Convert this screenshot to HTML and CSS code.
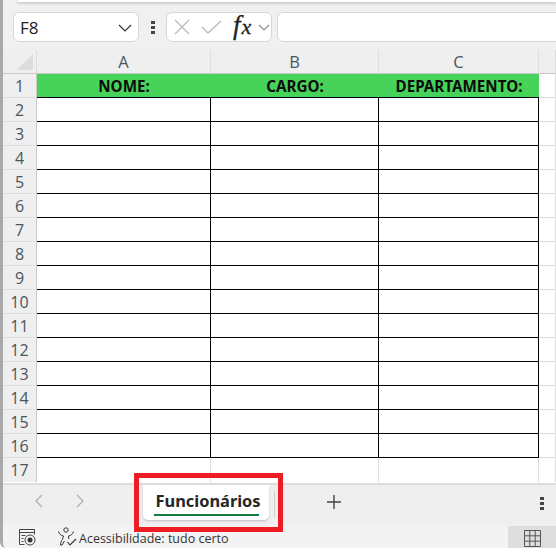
FILE: index.html
```html
<!DOCTYPE html>
<html lang="pt">
<head>
<meta charset="utf-8">
<title>Funcionários</title>
<link rel="stylesheet" href="styles.css">
</head>
<body>
<div class="window">
  <div class="top-strip"><div class="ribbon-edge"></div></div>
  <div class="formula-bar">
    <div class="name-box">
      <span class="name-text">F8</span>
      <svg class="chev" width="14" height="8" viewBox="0 0 14 8"><path d="M1 1l6 6 6-6" fill="none" stroke="#333" stroke-width="1.2"/></svg>
    </div>
    <div class="dots"><i></i><i></i><i></i></div>
    <div class="fx-box">
      <svg width="16" height="16" viewBox="0 0 16 16"><path d="M1 1l14 14M15 1L1 15" fill="none" stroke="#b9b9b9" stroke-width="1.3"/></svg>
      <svg class="check" width="22" height="14" viewBox="0 0 22 14"><path d="M1 7l6 6L20 1" fill="none" stroke="#b9b9b9" stroke-width="1.3"/></svg>
      <span class="fx"><span>f</span>x</span>
      <svg width="12" height="7" viewBox="0 0 12 7"><path d="M1 1l5 5 5-5" fill="none" stroke="#888" stroke-width="1.1"/></svg>
    </div>
    <div class="formula-input"></div>
  </div>
  <div class="sheet">
    <div class="corner"><svg width="16" height="16" viewBox="0 0 16 16"><path d="M16 0v16H0z" fill="#dcdcdc"/></svg></div>
    <div class="col-head">A</div><div class="col-head">B</div><div class="col-head">C</div><div class="col-head"></div>

    <div class="row-head">1</div><div class="title">NOME:</div><div class="title">CARGO:</div><div class="title">DEPARTAMENTO:</div><div class="cell"></div>
    <div class="row-head">2</div><div class="box"></div><div class="box"></div><div class="box"></div><div class="cell"></div>
    <div class="row-head">3</div><div class="box"></div><div class="box"></div><div class="box"></div><div class="cell"></div>
    <div class="row-head">4</div><div class="box"></div><div class="box"></div><div class="box"></div><div class="cell"></div>
    <div class="row-head">5</div><div class="box"></div><div class="box"></div><div class="box"></div><div class="cell"></div>
    <div class="row-head">6</div><div class="box"></div><div class="box"></div><div class="box"></div><div class="cell"></div>
    <div class="row-head">7</div><div class="box"></div><div class="box"></div><div class="box"></div><div class="cell"></div>
    <div class="row-head">8</div><div class="box"></div><div class="box"></div><div class="box"></div><div class="cell"></div>
    <div class="row-head">9</div><div class="box"></div><div class="box"></div><div class="box"></div><div class="cell"></div>
    <div class="row-head">10</div><div class="box"></div><div class="box"></div><div class="box"></div><div class="cell"></div>
    <div class="row-head">11</div><div class="box"></div><div class="box"></div><div class="box"></div><div class="cell"></div>
    <div class="row-head">12</div><div class="box"></div><div class="box"></div><div class="box"></div><div class="cell"></div>
    <div class="row-head">13</div><div class="box"></div><div class="box"></div><div class="box"></div><div class="cell"></div>
    <div class="row-head">14</div><div class="box"></div><div class="box"></div><div class="box"></div><div class="cell"></div>
    <div class="row-head">15</div><div class="box"></div><div class="box"></div><div class="box"></div><div class="cell"></div>
    <div class="row-head">16</div><div class="box"></div><div class="box"></div><div class="box"></div><div class="cell"></div>
    <div class="row-head last">17</div><div class="cell last"></div><div class="cell last"></div><div class="cell last"></div><div class="cell last"></div>
  </div>
  <div class="tab-bar">
    <div class="nav">
      <svg width="9" height="14" viewBox="0 0 9 14"><path d="M8 1L2 7l6 6" fill="none" stroke="#b0b0b0" stroke-width="1.3"/></svg>
      <svg width="9" height="14" viewBox="0 0 9 14"><path d="M1 1l6 6-6 6" fill="none" stroke="#b0b0b0" stroke-width="1.3"/></svg>
    </div>
    <div class="tab"><span class="tab-label">Funcionários</span></div>
    <div class="tab-sep"></div>
    <svg class="plus" width="16" height="16" viewBox="0 0 16 16"><path d="M8 1v14M1 8h14" fill="none" stroke="#444" stroke-width="1.4"/></svg>
    <div class="dots tab-dots"><i></i><i></i><i></i></div>
    <div class="callout"></div>
  </div>
  <div class="status-bar">
    <svg class="macro" width="18" height="18" viewBox="0 0 18 18"><path d="M1.500 1.500h15M1.500 4.500h15M1.500 1.500v15h5M16.500 1.500v5M3.500 7.500h4M3.500 10.500h2M3.500 13.500h2" fill="none" stroke="#444" stroke-width="1"/><circle cx="12" cy="12" r="5" fill="none" stroke="#444" stroke-width="1"/><circle cx="12" cy="12" r="2.500" fill="#333"/></svg>
    <svg class="a11y" width="21" height="20" viewBox="0 0 21 20"><circle cx="9" cy="3" r="2.200" fill="none" stroke="#333" stroke-width="1"/><path d="M1.500 4.500c.5 2.500 2.500 4 5 4.500l-1 3.500c-1 1-2 3-2 5.500h1.500l2.500-4M16.500 4.500c-.5 2.500-2.500 4-5 4.500l.3 3" fill="none" stroke="#333" stroke-width="1"/><path d="M10.500 15l2.500 3 6-6" fill="none" stroke="#333" stroke-width="1.100"/></svg>
    <span class="status-text">Acessibilidade: tudo certo</span>
    <div class="view-btn"><svg width="17" height="17" viewBox="0 0 17 17"><path d="M.5.500h16v16H.5zM.5 5.800h16M.5 11.200h16M5.800.500v16M11.200.500v16" fill="none" stroke="#555" stroke-width="1"/></svg></div>
  </div>
</div>
</body>
</html>
```
FILE: styles.css
```css
* { box-sizing: border-box; }
html, body { margin: 0; padding: 0; background: #fff; }
body { width: 556px; height: 552px; overflow: hidden; font-family: "Open Sans", "Noto Sans", sans-serif; }

.window {
  width: 556px;
  height: 548px;
  background: #f0f0f0;
  border-left: 3px solid #a9a9a9;
  border-bottom-left-radius: 6px;
  overflow: hidden;
}

.top-strip { height: 12px; padding-left: 14px; }
.ribbon-edge {
  height: 2px;
  background: #fff;
  border-bottom-left-radius: 4px;
  box-shadow: 0 1px 3px rgba(0, 0, 0, .28);
}

.formula-bar { height: 30px; display: flex; align-items: stretch; padding-left: 10px; }
.name-box, .fx-box, .formula-input {
  height: 30px;
  background: #fff;
  border: 1px solid #d6d6d6;
  border-radius: 6px;
}
.name-box { width: 126px; display: flex; align-items: center; justify-content: space-between; padding: 0 6px 0 6px; }
.name-text { font: 17px "Open Sans", sans-serif; color: #222; }
.chev { margin-top: 2px; }
.dots { display: flex; flex-direction: column; justify-content: center; gap: 2px; width: 4px; }
.dots i { display: block; width: 4px; height: 3px; background: #444; }
.formula-bar .dots { margin: 0 11px 0 12px; }
.fx-box { width: 106px; display: flex; align-items: center; padding-left: 7px; }
.check { margin-left: 11px; }
.fx { font: italic 22px "Liberation Serif", serif; color: #222; margin-left: 10px; width: 25px; margin-top: -3px; -webkit-text-stroke: .3px #222; }
.fx span { font-size: 27px; margin-right: 1px; }
.formula-input { margin-left: 5px; flex: 1; margin-right: -6px; }

.sheet {
  margin-top: 8px;
  display: grid;
  grid-template-columns: 34px 174px 168px 160px 17px;
  grid-auto-rows: 24px;
  background: #fff;
  height: 433px;
}
.corner, .col-head, .row-head { background: #efefef; color: #444; }
.corner { border-right: 1px solid #ddd; border-bottom: 1px solid #c8c8c8; display: flex; align-items: flex-end; justify-content: flex-end; padding: 0 3px 3px 0; }
.col-head { border-right: 1px solid #ddd; border-bottom: 1px solid #c8c8c8; font: 16.500px "Open Sans", sans-serif; text-align: center; line-height: 24px; color: #4a5560; }
.row-head { border-right: 1px solid #c8c8c8; border-bottom: 1px solid #ddd; font: 16px "Open Sans", sans-serif; text-align: center; line-height: 24px; color: #4a5560; }
.title {
  background: #47d359;
  border-bottom: 1px solid #000;
  font: 700 15.200px "Noto Sans", sans-serif;
  color: #0c0c0c;
  text-align: center;
  line-height: 25px;
}
.box { background: #fff; border-right: 1px solid #000; border-bottom: 1px solid #000; }
.cell { background: #fff; border-right: 1px solid #ddd; border-bottom: 1px solid #ddd; }
.last { border-bottom: 0; }

.tab-bar {
  position: relative;
  height: 41px;
  border-top: 2px solid #dcdcdc;
  display: flex;
  align-items: flex-start;
  background: #efefef;
}
.nav { width: 140px; padding: 9px 0 0 31px; display: flex; gap: 33px; height: 100%; }
.tab {
  width: 126px;
  height: 35px;
  background: #fff;
  border-radius: 0 0 5px 5px;
  box-shadow: 0 1px 2px rgba(0, 0, 0, .2);
  display: flex;
  justify-content: center;
  align-items: flex-start;
}
.tab-label {
  display: block;
  width: 105px;
  white-space: nowrap;
  font: 700 16.400px/23px "Noto Sans", sans-serif;
  color: #262626;
  margin-top: 4px;
  padding-left: 2px;
  height: 27px;
  border-bottom: 2px solid #107c41;
}
.tab-sep { width: 1px; height: 27px; margin: 6px 0 0 5px; background: #cfcfcf; }
.plus { margin: 9px 0 0 51px; }
.tab-dots { margin: 12px 0 0 198px; justify-content: flex-start; }
.callout {
  position: absolute;
  left: 131px;
  top: -12px;
  width: 149px;
  height: 59px;
  border: 5px solid #ee1c25;
  z-index: 2;
}

.status-bar {
  margin-top: 2px;
  height: 24px;
  background: #f3f3f3;
  display: flex;
  align-items: center;
}
.macro { margin-left: 15px; margin-top: -2px; }
.a11y { margin-left: 21px; margin-top: -2px; }
.status-text { font: 12.500px "Open Sans", sans-serif; color: #333; margin-left: 1px; }
.view-btn { margin-left: auto; width: 48px; height: 24px; background: #dedede; display: flex; align-items: center; justify-content: center; }
```
